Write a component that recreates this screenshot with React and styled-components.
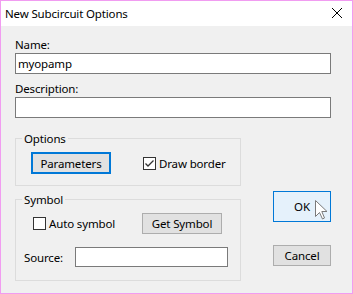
import styled, { createGlobalStyle } from 'styled-components';

const GlobalStyle = createGlobalStyle`
  html, body {
    margin: 0;
    padding: 0;
    background: #ffffff;
  }
  * {
    box-sizing: border-box;
  }
`;

const Window = styled.div`
  width: 353px;
  height: 294px;
  border: 1px solid #f19cf1;
  background: #f0f0f0;
  display: flex;
  flex-direction: column;
  font-family: 'Noto Sans', 'Liberation Sans', sans-serif;
  font-size: 11.5px;
  letter-spacing: -0.15px;
  color: #000;
`;

const TitleBar = styled.div`
  height: 25px;
  background: #ffffff;
  display: flex;
  align-items: center;
  justify-content: space-between;
  padding: 0 10px 0 4px;
  flex-shrink: 0;
`;

const Title = styled.span`
  font-size: 11.5px;
`;

const CloseIcon = styled.svg`
  width: 10px;
  height: 10px;
  margin-top: -1px;
`;

const Body = styled.div`
  flex: 1;
  padding: 11px 21px 0 14px;
  display: flex;
  flex-direction: column;
`;

const FieldLabel = styled.div`
  line-height: 15px;
  height: 15px;
  margin-top: ${(p) => p.$top || 0}px;
  margin-bottom: 1px;
`;

const TextBox = styled.div`
  height: ${(p) => p.$height || 21}px;
  width: ${(p) => (p.$width ? `${p.$width}px` : '100%')};
  background: #ffffff;
  border: 1px solid #7a7a7a;
  padding: 0 2px;
  display: flex;
  align-items: center;
  line-height: 15px;
`;

const Lower = styled.div`
  display: flex;
  gap: 32px;
`;

const Groups = styled.div`
  width: 227px;
  display: flex;
  flex-direction: column;
`;

const GroupBox = styled.div`
  position: relative;
  border: 1px solid #dcdcdc;
  margin-top: ${(p) => p.$top}px;
  padding: ${(p) => p.$padding};
`;

const Legend = styled.span`
  position: absolute;
  top: -8px;
  left: 6px;
  padding: 0 2px;
  background: #f0f0f0;
  line-height: 15px;
`;

const Row = styled.div`
  display: flex;
  align-items: center;
  margin-left: ${(p) => p.$indent || 0}px;
  margin-top: ${(p) => p.$top || 0}px;
`;

const Button = styled.div`
  width: ${(p) => p.$width || 80}px;
  height: ${(p) => p.$height || 21}px;
  display: flex;
  align-items: center;
  justify-content: center;
  position: relative;
  background: ${(p) => (p.$hover ? '#e5f1fb' : '#e1e1e1')};
  border: ${(p) =>
    p.$focus ? '2px solid #0078d7' : p.$hover ? '1px solid #0078d7' : '1px solid #adadad'};
  margin-top: ${(p) => p.$top || 0}px;
`;

const CheckLabel = styled.div`
  display: flex;
  align-items: center;
  gap: 3px;
  width: ${(p) => (p.$width ? `${p.$width}px` : 'auto')};
  margin-left: ${(p) => p.$left || 0}px;
`;

const CheckBox = styled.div`
  width: 13px;
  height: 13px;
  background: #ffffff;
  border: 1px solid #333333;
  display: flex;
  align-items: center;
  justify-content: center;
`;

const SourceLabel = styled.span`
  width: 51px;
  line-height: 15px;
`;

const Actions = styled.div`
  display: flex;
  flex-direction: column;
  width: 58px;
`;

const Cursor = styled.svg`
  position: absolute;
  left: 41px;
  top: 8px;
  width: 13px;
  height: 20px;
`;

function Check({ checked }) {
  return (
    <CheckBox>
      {checked ? (
        <svg width="11" height="11" viewBox="0 0 11 11">
          <path d="M1.5 5.5 L4 8 L9.5 2.5" fill="none" stroke="#333" strokeWidth="1.3" />
        </svg>
      ) : null}
    </CheckBox>
  );
}

export default function App() {
  return (
    <>
      <GlobalStyle />
      <Window>
        <TitleBar>
          <Title>New Subcircuit Options</Title>
          <CloseIcon viewBox="0 0 10 10">
            <path d="M0 0 L10 10 M10 0 L0 10" stroke="#000" strokeWidth="1" />
          </CloseIcon>
        </TitleBar>
        <Body>
          <FieldLabel>Name:</FieldLabel>
          <TextBox>myopamp</TextBox>
          <FieldLabel $top={7}>Description:</FieldLabel>
          <TextBox />
          <Lower>
            <Groups>
              <GroupBox $top={20} $padding="13px 0 11px 15px">
                <Legend>Options</Legend>
                <Row>
                  <Button $focus $height={22}>Parameters</Button>
                  <CheckLabel $left={32}>
                    <Check checked />
                    Draw border
                  </CheckLabel>
                </Row>
              </GroupBox>
              <GroupBox $top={13} $padding="13px 0 13px 8px">
                <Legend>Symbol</Legend>
                <Row $indent={9}>
                  <CheckLabel $width={109}>
                    <Check />
                    Auto symbol
                  </CheckLabel>
                  <Button>Get Symbol</Button>
                </Row>
                <Row $top={13}>
                  <SourceLabel>Source:</SourceLabel>
                  <TextBox $width={153} $height={20} />
                </Row>
              </GroupBox>
            </Groups>
            <Actions>
              <Button $hover $width={58} $height={31} $top={73}>
                OK
                <Cursor viewBox="0 0 13 20">
                  <path
                    d="M0.5 0.5 L0.5 16.5 L4.5 12.5 L7.5 19 L9.5 18 L6.8 11.5 L12 11.5 Z"
                    fill="#ffffff"
                    stroke="#7a7a7a"
                    strokeWidth="1"
                    strokeLinejoin="round"
                  />
                </Cursor>
              </Button>
              <Button $width={58} $height={21} $top={23}>Cancel</Button>
            </Actions>
          </Lower>
        </Body>
      </Window>
    </>
  );
}
